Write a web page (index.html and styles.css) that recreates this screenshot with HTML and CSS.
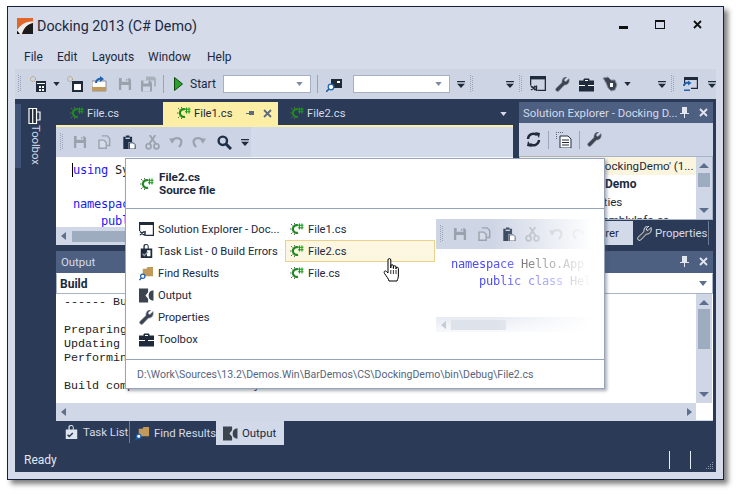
FILE: index.html
```html
<!DOCTYPE html>
<html lang="en">
<head>
<meta charset="utf-8">
<title>Docking 2013 (C# Demo)</title>
<link rel="stylesheet" href="styles.css">
</head>
<body>
<svg class="defs" width="0" height="0" aria-hidden="true">
  <defs>
    <symbol id="cs" viewBox="0 0 14 14">
      <path d="M8 3.300A3.900 3.900 0 1 0 8 10.700" fill="none" stroke="#1c8a1c" stroke-width="2.200"/>
      <path d="M1 2l1.500 1.500M1 12l1.500-1.500M0 7h1.500M4.500 1v1.500M4.500 11.500V13" stroke="#5c6b5c" stroke-width="1"/>
      <path d="M9.500 1.500v6M12 1.500v6M8 3.300h5.500M8 5.700h5.500" stroke="#1c9a1c" stroke-width="1.100"/>
    </symbol>
    <symbol id="save" viewBox="0 0 15 15">
      <path d="M1 1h11l2 2v11H1z" fill="#9aa3ad"/>
      <path d="M4 1h7v4H4zM3.500 8.500h8V14h-8z" fill="#cfd6e5"/>
      <path d="M8.500 2h1.500v2H8.500z" fill="#9aa3ad"/>
    </symbol>
    <symbol id="saveall" viewBox="0 0 16 15">
      <path d="M6 0h8l2 2v8h-2V4H6z" fill="#a9b1bb"/>
      <path d="M1 4h9l2 2v9H1z" fill="#9aa3ad"/>
      <path d="M3.500 4h5v3h-5zM3 10h7v5H3z" fill="#cfd6e5"/>
    </symbol>
    <symbol id="copy" viewBox="0 0 15 16">
      <path d="M5 1h6l3 3v8h-3" fill="none" stroke="#9aa3ad" stroke-width="1.600"/>
      <path d="M1.800 5.800h5.500l2.700 2.700v6.700H1.800z" fill="#d6dcea" stroke="#9aa3ad" stroke-width="1.600"/>
    </symbol>
    <symbol id="paste" viewBox="0 0 15 16">
      <path d="M1 2h3V.5h4V2h3v6H7v8H1z" fill="#1e3048"/>
      <path d="M3.500 3h5v1.500h-5z" fill="#cfd6e5"/>
      <path d="M8 9h4.500l2 2v5H8z" fill="#fff" stroke="#1e3048"/>
    </symbol>
    <symbol id="cut" viewBox="0 0 16 16">
      <circle cx="3.800" cy="12" r="2.700" fill="none" stroke="#9aa3ad" stroke-width="1.800"/>
      <circle cx="12.200" cy="12" r="2.700" fill="none" stroke="#9aa3ad" stroke-width="1.800"/>
      <path d="M4.500 9.500L11 0M11.500 9.500L5 0" stroke="#9aa3ad" stroke-width="2"/>
    </symbol>
    <symbol id="undo" viewBox="0 0 14 14">
      <path d="M3 7A5 4.500 0 0 1 12 5C13 7.500 12 10 10 12" fill="none" stroke="#9aa3ad" stroke-width="2.200"/>
      <path d="M0 3.500h6.500L3 8.500z" fill="#9aa3ad"/>
    </symbol>
    <symbol id="search" viewBox="0 0 15 15">
      <circle cx="5.800" cy="5.800" r="4.200" fill="none" stroke="#1e3048" stroke-width="2.400"/>
      <path d="M9 9l5 5" stroke="#1e3048" stroke-width="3"/>
    </symbol>
    <symbol id="sol" viewBox="0 0 15 15">
      <path d="M0 0h15v14H7v-1.200h6.800V3H1.200v6H0z" fill="#1f2a3a"/>
      <path d="M0 3h15v-3H0z" fill="#1f2a3a"/>
      <path d="M1 9.500l4 3.500M1 13l4-3.500M6 9v5" stroke="#1f2a3a" stroke-width="1.500"/>
    </symbol>
    <symbol id="task" viewBox="0 0 15 17">
      <path d="M1 5h3V2.500a3 2.500 0 0 1 6 0V5h4v11H1z" fill="#1f2a3a"/>
      <path d="M5.500 2.500a1.700 1.500 0 0 1 3.400 0V5H5.500zM8 7h4v7H8z" fill="#fff"/>
      <path d="M3 11l2 2 4-4" fill="none" stroke="#8f9aa8" stroke-width="1.600"/>
    </symbol>
    <symbol id="find" viewBox="0 0 16 16">
      <path d="M4 3h4l1-2h6v10H4z" fill="#c19a5b"/>
      <circle cx="4" cy="11" r="2.300" fill="#fff" stroke="#1e62b0" stroke-width="1.300"/>
      <path d="M2.500 12.700L.5 15" stroke="#1e62b0" stroke-width="1.500"/>
    </symbol>
    <symbol id="out" viewBox="0 0 14 13">
      <path d="M0 0h8.500v3.500L6 6.500l2.500 3V13H0z" fill="#3c4450"/>
      <path d="M13.500 1.500v10A5 5 0 0 1 9 6.500 5 5 0 0 1 13.500 1.500z" fill="#3c4450"/>
    </symbol>
    <symbol id="wrench" viewBox="0 0 15 15">
      <path d="M14 1.500L11 4.500 9.500 4 9.300 2.500 12 0C9 -.5 6.500 2 7 5.500L.8 11.500a2 2 0 0 0 2.700 2.700L9.500 8C13 8.500 15 5 14 1.500z" fill="#3c4450" stroke="#8f9aa8" stroke-width=".6"/>
    </symbol>
    <symbol id="case" viewBox="0 0 15 13">
      <path d="M5 3V1h5v2M0 3h15v10H0z" fill="#1f2a3a" stroke="#1f2a3a"/>
      <path d="M6 2h3v1H6zM0 7h6v1H0zM9 7h6v1H9z" fill="#fff"/>
    </symbol>
    <symbol id="tri" viewBox="0 0 8 5"><path d="M0 0h8L4 5z"/></symbol>
    <symbol id="dd" viewBox="0 0 9 8"><path d="M0 0h9v1.500H0zM0 3h9L4.500 8z"/></symbol>
    <symbol id="x" viewBox="0 0 9 9"><path d="M1 1l7 7M8 1L1 8" fill="none" stroke="currentColor" stroke-width="1.800"/></symbol>
    <symbol id="pin" viewBox="0 0 9 11"><path d="M2 0h5v6h2v1H5v4H4V7H0V6h2z" fill="currentColor"/></symbol>
    <symbol id="grip" viewBox="0 0 5 18"><path d="M0 0h1v1H0zM2 1h1v1H2zM0 2h1v1H0zM2 3h1v1H2zM0 4h1v1H0zM2 5h1v1H2zM0 6h1v1H0zM2 7h1v1H2zM0 8h1v1H0zM2 9h1v1H2zM0 10h1v1H0zM2 11h1v1H2zM0 12h1v1H0zM2 13h1v1H2zM0 14h1v1H0zM2 15h1v1H2zM0 16h1v1H0z" fill="#98a4b6"/></symbol>
  </defs>
</svg>

<div class="window">
  <header class="titlebar">
    <svg class="logo" viewBox="0 0 16 16" aria-hidden="true">
      <rect width="16" height="16" fill="#e2662a"/>
      <path d="M0 16V12C4 6 9 3.500 16 3.500V5C10 6.500 7 10 5 16z" fill="#eee"/>
      <path d="M5 16C7 10 10 6.500 16 5V16z" fill="#1c1c1c"/>
      <path d="M0 16V12.500L3 16z" fill="#111"/>
    </svg>
    <h1 class="title">Docking 2013 (C# Demo)</h1>
    <div class="winbtns">
      <span class="wb-min"></span>
      <span class="wb-max"></span>
      <svg class="wb-close" aria-hidden="true"><use href="#x"/></svg>
    </div>
  </header>

  <nav class="menu">
    <span>File</span><span>Edit</span><span>Layouts</span><span>Window</span><span>Help</span>
  </nav>

  <div class="toolbar">
    <svg class="grip" aria-hidden="true"><use href="#grip"/></svg>
    <svg class="i16 m7" viewBox="0 0 16 16" aria-hidden="true"><path d="M6 5h10v11H6z" fill="#1f2a3a"/><path d="M7 7h8v1H7zM9 10h2v2H9zM12 10h2v2h-2zM9 13h2v2H9zM12 13h2v2h-2z" fill="#fff"/><circle cx="3" cy="3" r="2.500" fill="none" stroke="#b98a45" stroke-dasharray="1 1"/></svg>
    <svg class="tri m7" aria-hidden="true"><use href="#tri"/></svg>
    <svg class="i16 m7" viewBox="0 0 16 16" aria-hidden="true"><path d="M5 5h11v11H5z" fill="#1f2a3a"/><path d="M7 8h7v6H7z" fill="#fff"/><circle cx="3" cy="3" r="2.500" fill="none" stroke="#b98a45" stroke-dasharray="1 1"/></svg>
    <svg class="i16 m9" viewBox="0 0 16 16" aria-hidden="true"><path d="M0 5h14v10H0z" fill="#fff" stroke="#8a8f96"/><path d="M0 11h14v4H0z" fill="#c19a5b"/><path d="M4 7a4 4 0 0 1 5-4" fill="none" stroke="#1e62b0" stroke-width="2"/><path d="M8 0l4 3-4 3z" fill="#1e62b0"/></svg>
    <svg class="i14 m10" aria-hidden="true"><use href="#save"/></svg>
    <svg class="i16 m8" aria-hidden="true"><use href="#saveall"/></svg>
    <span class="sep m7"></span>
    <svg class="play m10" viewBox="0 0 9 14" aria-hidden="true"><path d="M.5 .5L8.500 7 .5 13.500z" fill="#2ea02e" stroke="#0c4a0c"/></svg>
    <span class="start">Start</span>
    <span class="combo c1"><svg class="tri" aria-hidden="true"><use href="#tri"/></svg></span>
    <span class="sep m6"></span>
    <svg class="i16 m8" viewBox="0 0 16 16" aria-hidden="true"><path d="M5 3h11v9H5z" fill="#1f2a3a"/><path d="M11 5h3v2h-3z" fill="#fff"/><circle cx="5" cy="11" r="2.800" fill="#fff" stroke="#1e62b0" stroke-width="1.300"/><path d="M3 13l-3 3" stroke="#1e62b0" stroke-width="1.600"/></svg>
    <span class="combo c2"><svg class="tri" aria-hidden="true"><use href="#tri"/></svg></span>
    <svg class="dd m7" aria-hidden="true"><use href="#dd"/></svg>
    <svg class="grip m5" aria-hidden="true"><use href="#grip"/></svg>
    <svg class="dd m28" aria-hidden="true"><use href="#dd"/></svg>
    <svg class="grip m5" aria-hidden="true"><use href="#grip"/></svg>
    <svg class="i16 m6" aria-hidden="true"><use href="#sol"/></svg>
    <svg class="i15 m9" aria-hidden="true"><use href="#wrench"/></svg>
    <svg class="i15 m9" aria-hidden="true"><use href="#case"/></svg>
    <svg class="i16 m8" viewBox="0 0 16 16" aria-hidden="true"><path d="M1 2l5-1 3 3 4 0 2 5-2 5-4 1-3-3-2-5z" fill="#3c4450" stroke="#8f9aa8"/><path d="M8 7h3v4H8z" fill="#fff"/></svg>
    <svg class="tri m6" aria-hidden="true"><use href="#tri"/></svg>
    <svg class="dd m27" aria-hidden="true"><use href="#dd"/></svg>
    <svg class="grip m5" aria-hidden="true"><use href="#grip"/></svg>
    <svg class="i16 m7" viewBox="0 0 16 16" aria-hidden="true"><path d="M1 1h14v12H8v-1.200h5.800V4H2.200v5H1z" fill="#1f2a3a"/><path d="M1 10a3 3 0 0 1 4-3" fill="none" stroke="#1e62b0" stroke-width="2"/><path d="M5 4.500l3.500 2.500L5 9.500zM1 15h6v-1.500H1z" fill="#1e62b0"/></svg>
    <svg class="dd m9" aria-hidden="true"><use href="#dd"/></svg>
  </div>

  <div class="workspace">
    <div class="dockarea">
      <aside class="sidestrip">
        <span class="strip-tab"></span>
        <div class="toolbox-tab">
          <svg class="toolbox-ic" viewBox="0 0 13 16" aria-hidden="true"><path d="M1 .5h7.500v15H1z" fill="#222b3a"/><path d="M1 .5h7.500v15H1zM8.500 4h3.500v8H8.500zM4.700 .5v15" fill="none" stroke="#fff" stroke-width="1.200"/></svg>
          <span class="vtext">Toolbox</span>
        </div>
      </aside>
      <div class="docks">
        <div class="toprow">
          <section class="docpane">
            <div class="doctabs">
              <div class="doctab tab-a"><svg class="i14" aria-hidden="true"><use href="#cs"/></svg><span>File.cs</span></div>
              <div class="doctab tab-b active"><svg class="i14" aria-hidden="true"><use href="#cs"/></svg><span>File1.cs</span>
                <svg class="tabpin" viewBox="0 0 9 7" aria-hidden="true"><path d="M0 3h3V1h5v4H3V4H0z" fill="#5d6b80"/></svg>
                <svg class="tabx" aria-hidden="true"><use href="#x"/></svg></div>
              <div class="doctab tab-c"><svg class="i14" aria-hidden="true"><use href="#cs"/></svg><span>File2.cs</span></div>
              <svg class="tabmenu" aria-hidden="true"><use href="#tri"/></svg>
            </div>
            <div class="docbody">
              <div class="doctools">
                <div class="doctools-in">
                  <svg class="grip" aria-hidden="true"><use href="#grip"/></svg>
                  <svg class="i14 g8" aria-hidden="true"><use href="#save"/></svg>
                  <svg class="i14 g10" aria-hidden="true"><use href="#copy"/></svg>
                  <svg class="i14 g11" aria-hidden="true"><use href="#paste"/></svg>
                  <svg class="i15 g9" aria-hidden="true"><use href="#cut"/></svg>
                  <svg class="i14 g9" aria-hidden="true"><use href="#undo"/></svg>
                  <svg class="i14 g9 flip" aria-hidden="true"><use href="#undo"/></svg>
                  <svg class="i15 g11" aria-hidden="true"><use href="#search"/></svg>
                  <svg class="dd g9" aria-hidden="true"><use href="#dd"/></svg>
                </div>
              </div>
              <pre class="code"><span class="kw caret">using</span> System;

<span class="kw">namespace</span> Hello.App {
    <span class="kw">public class</span> HelloWorld {</pre>
              <div class="hscroll hs-doc"><span class="arr-l"></span><span class="thumb"></span></div>
            </div>
          </section>
          <section class="rightpane">
            <div class="ptitle">
              <span class="ptitle-text">Solution Explorer - Docking D...</span>
              <svg class="ppin" aria-hidden="true"><use href="#pin"/></svg>
              <svg class="px" aria-hidden="true"><use href="#x"/></svg>
            </div>
            <div class="rtools">
              <svg class="i15" viewBox="0 0 15 15" aria-hidden="true"><path d="M2 7a5.500 5.500 0 0 1 9-4M13 8a5.500 5.500 0 0 1-9 4" fill="none" stroke="#1f2a3a" stroke-width="2.400"/><path d="M9 0l5 1-1 5zM6 15l-5-1 1-5z" fill="#1f2a3a"/></svg>
              <span class="sep2"></span>
              <svg class="i16" viewBox="0 0 16 16" aria-hidden="true"><path d="M4 4h8l3 3v9H4z" fill="#fff" stroke="#1f2a3a"/><path d="M6 8h7M6 10.500h7M6 13h7" stroke="#1f2a3a"/><path d="M0 0h1v1H0zM2 0h1v1H2zM4 0h1v1H4zM6 0h1v1H6zM0 2h1v1H0zM0 4h1v1H0zM0 6h1v1H0z" fill="#667"/></svg>
              <span class="sep2"></span>
              <svg class="i15" aria-hidden="true"><use href="#wrench"/></svg>
            </div>
            <div class="tree">
              <div class="tree-rows">
                <div class="row sel">Solution 'DockingDemo' (1...</div>
                <div class="row bold">DockingDemo</div>
                <div class="row">Properties</div>
                <div class="row r4">AssemblyInfo.cs</div>
              </div>
              <div class="vscroll vs-tree"><span class="up"></span><span class="vthumb t-tree"></span><span class="dn"></span></div>
            </div>
            <div class="rtabs">
              <div class="rtab on">Solution Explorer</div>
              <div class="rtab off"><svg class="i15 lite" viewBox="0 0 15 15" aria-hidden="true"><path d="M14 1.500L11 4.500 9.500 4 9.300 2.500 12 0C9 -.5 6.500 2 7 5.500L.8 11.500a2 2 0 0 0 2.700 2.700L9.500 8C13 8.500 15 5 14 1.500z" fill="#3c4450" stroke="#dfe4ee"/></svg>Properties</div>
            </div>
          </section>
        </div>

        <section class="outpane">
          <div class="ptitle">
            <span class="ptitle-text">Output</span>
            <svg class="ppin" aria-hidden="true"><use href="#pin"/></svg>
            <svg class="px" aria-hidden="true"><use href="#x"/></svg>
          </div>
          <div class="outcombo"><b>Build</b><svg class="tri" aria-hidden="true"><use href="#tri"/></svg></div>
          <div class="outmain">
            <pre class="log">------ Build started ------

Preparing resources
Updating references
Performing main compilation

Build completed successfully.</pre>
            <div class="vscroll vs-out"><span class="up"></span><span class="vthumb t-out"></span><span class="dn"></span></div>
          </div>
          <div class="outfoot">
            <div class="hscroll hs-out"><span class="arr-l"></span><span class="arr-r"></span></div>
            <span class="corner"></span>
          </div>
        </section>

        <div class="bottabs">
          <div class="btab b-task"><svg class="i15 lite2" viewBox="0 0 15 17" aria-hidden="true"><path d="M1 5h3V2.500a3 2.500 0 0 1 6 0V5h4v11H1z" fill="#dfe4ee"/><path d="M5.500 2.500a1.700 1.500 0 0 1 3.400 0V5H5.500z" fill="#2a3a57"/><path d="M3 11l2 2 4-4" fill="none" stroke="#2a3a57" stroke-width="1.600"/></svg>Task List</div>
          <div class="btab b-find"><svg class="i15" aria-hidden="true"><use href="#find"/></svg>Find Results</div>
          <div class="btab b-out on"><svg class="i15" aria-hidden="true"><use href="#out"/></svg>Output</div>
        </div>
      </div>
    </div>
    <footer class="status">
      <span class="ready">Ready</span>
      <span class="st-sep"></span>
      <span class="st-sep st-sep2"></span>
      <svg class="sizegrip" viewBox="0 0 8 8" aria-hidden="true"><path d="M6 0h1v1H6zM6 2h1v1H6zM4 2h1v1H4zM6 4h1v1H6zM4 4h1v1H4zM2 4h1v1H2zM6 6h1v1H6zM4 6h1v1H4zM2 6h1v1H2zM0 6h1v1H0z" fill="#8794aa"/></svg>
    </footer>
  </div>
</div>

<div class="popup">
  <div class="pop-head">
    <svg class="i14" aria-hidden="true"><use href="#cs"/></svg>
    <div class="pop-name"><b>File2.cs</b><b>Source file</b></div>
  </div>
  <div class="pop-body">
    <ul class="pop-col col-a">
      <li><svg class="i15" aria-hidden="true"><use href="#sol"/></svg>Solution Explorer - Doc...</li>
      <li><svg class="i15" aria-hidden="true"><use href="#task"/></svg>Task List - 0 Build Errors</li>
      <li><svg class="i15" aria-hidden="true"><use href="#find"/></svg>Find Results</li>
      <li><svg class="i15" aria-hidden="true"><use href="#out"/></svg>Output</li>
      <li><svg class="i15" aria-hidden="true"><use href="#wrench"/></svg>Properties</li>
      <li><svg class="i15" aria-hidden="true"><use href="#case"/></svg>Toolbox</li>
    </ul>
    <ul class="pop-col col-b">
      <li><svg class="i14" aria-hidden="true"><use href="#cs"/></svg>File1.cs</li>
      <li class="hot"><svg class="i14" aria-hidden="true"><use href="#cs"/></svg>File2.cs</li>
      <li><svg class="i14" aria-hidden="true"><use href="#cs"/></svg>File.cs</li>
    </ul>
    <div class="preview">
      <div class="pv-tools">
        <svg class="grip" aria-hidden="true"><use href="#grip"/></svg>
        <svg class="i14 g8" aria-hidden="true"><use href="#save"/></svg>
        <svg class="i14 g10" aria-hidden="true"><use href="#copy"/></svg>
        <svg class="i14 g11" aria-hidden="true"><use href="#paste"/></svg>
        <svg class="i15 g9" aria-hidden="true"><use href="#cut"/></svg>
        <svg class="i14 g9" aria-hidden="true"><use href="#undo"/></svg>
        <svg class="i14 g9 flip" aria-hidden="true"><use href="#undo"/></svg>
      </div>
      <pre class="pv-code"><span class="kw">namespace</span> Hello.App {
    <span class="kw">public class</span> HelloWorld</pre>
      <div class="pv-scroll"><span class="arr-l"></span><span class="pv-thumb"></span></div>
    </div>
  </div>
  <div class="pop-foot">D:\Work\Sources\13.2\Demos.Win\BarDemos\CS\DockingDemo\bin\Debug\File2.cs</div>
  <svg class="hand" viewBox="0 0 17 24" aria-hidden="true"><path d="M5 2a1.400 1.400 0 0 1 2.800 0V10V8a1.300 1.300 0 0 1 2.600 0V10.500V9a1.300 1.300 0 0 1 2.600 0V11V10.500a1.200 1.200 0 0 1 2.400 0V17C15.500 20 14.500 21 14 23H6C5.500 20.500 3.500 18.500 1.500 15.500C.5 13.500 2 12 3.500 13.500L5 15z" fill="#fff" stroke="#000"/><path d="M7.800 12v4M10.400 12v4M13 12v4" stroke="#000" stroke-width=".8"/></svg>
</div>
</body>
</html>
```

FILE: styles.css
```css
* { box-sizing: border-box; }
html, body { margin: 0; padding: 0; }
body {
  width: 737px;
  height: 494px;
  overflow: hidden;
  background: #fff;
  font-family: Roboto, "Noto Sans", sans-serif;
  font-size: 11.2px;
  color: #1b2940;
  position: relative;
}
.defs { position: absolute; }
svg { display: block; flex: none; }
ul { list-style: none; margin: 0; padding: 0; }
pre { margin: 0; }

.window {
  margin: 6px 0 0 7px;
  width: 717px;
  height: 474px;
  padding-bottom: 7px;
  border: 1px solid #16233a;
  background: #d5dbe9;
  box-shadow: 4px 4px 5px rgba(40, 40, 40, .6);
  display: flex;
  flex-direction: column;
}

/* Title */
.titlebar { height: 36px; display: flex; align-items: center; padding: 2px 0 0 9px; flex: none; }
.logo { width: 16px; height: 16px; }
.title { margin: 0 0 0 4px; font-size: 14.300px; font-weight: 400; color: #1b2940; }
.winbtns { margin-left: auto; display: flex; align-items: center; padding: 0 21px 3px 0; }
.wb-min { width: 9px; height: 3px; background: #111; margin-top: 5px; }
.wb-max { width: 10px; height: 9px; border: 1px solid #111; border-top-width: 2px; margin-left: 27px; }
.wb-close { width: 9px; height: 9px; margin-left: 28px; color: #111; }

/* Menu */
.menu { height: 26px; display: flex; align-items: center; padding: 1px 0 0 16px; font-size: 12px; flex: none; }
.menu span:nth-child(1) { width: 33px; }
.menu span:nth-child(2) { width: 35px; }
.menu span:nth-child(3) { width: 56px; }
.menu span:nth-child(4) { width: 59px; }

/* Toolbar */
.toolbar { height: 30px; margin-left: 7px; width: 701px; background: #cdd4e4; display: flex; align-items: center; padding-left: 3px; flex: none; }
.grip { width: 5px; height: 18px; }
.i14 { width: 14px; height: 14px; }
.i15 { width: 15px; height: 15px; }
.i16 { width: 16px; height: 16px; }
.tri { width: 7px; height: 4px; fill: #1f2a3a; }
.dd { width: 8px; height: 7px; fill: #1f2a3a; }
.m5 { margin-left: 5px; }
.m6 { margin-left: 6px; }
.m7 { margin-left: 7px; }
.m8 { margin-left: 8px; }
.m9 { margin-left: 9px; }
.m10 { margin-left: 10px; }
.m27 { margin-left: 27px; }
.m28 { margin-left: 31px; }
.g8 { margin-left: 8px; }
.g9 { margin-left: 9px; }
.g10 { margin-left: 10px; }
.g11 { margin-left: 11px; }
.sep { width: 1px; height: 18px; background: #98a4b6; }
.play { width: 9px; height: 14px; }
.start { width: 33px; margin-left: 7px; font-size: 12px; }
.combo { height: 18px; background: #fff; border: 1px solid #a5b0c3; display: flex; align-items: center; justify-content: flex-end; padding-right: 7px; }
.combo .tri { fill: #7c8ba4; }
.c1 { width: 88px; }
.c2 { width: 97px; margin-left: 11px; }
.flip { transform: scaleX(-1); }

/* Workspace */
.workspace { flex: 1; margin-left: 7px; width: 701px; background: #2a3a57; display: flex; flex-direction: column; min-height: 0; }
.dockarea { flex: 1; display: flex; min-height: 0; }
.sidestrip { width: 41px; display: flex; color: #d5dbe9; flex: none; }
.strip-tab { width: 6px; height: 64px; margin-top: 5px; background: #3e5376; flex: none; }
.toolbox-tab { padding: 9px 0 0 7px; }
.toolbox-ic { width: 13px; height: 16px; }
.vtext { display: block; writing-mode: vertical-rl; margin: 1px 0 0 1px; line-height: 13px; }
.docks { flex: 1; display: flex; flex-direction: column; min-width: 0; padding-top: 3px; }
.toprow { display: flex; height: 143px; flex: none; }

/* Doc pane */
.docpane { width: 457px; display: flex; flex-direction: column; }
.doctabs { height: 23px; display: flex; position: relative; flex: none; color: #d5dbe9; }
.doctab { display: flex; align-items: center; height: 23px; padding-bottom: 1px; }
.doctab span { margin-left: 3px; }
.tab-a { width: 107px; padding-left: 14px; }
.tab-b { width: 115px; padding-left: 14px; background: #fdeea5; color: #1b2940; }
.tab-c { padding-left: 12px; }
.tabpin { width: 9px; height: 7px; margin-left: 14px; }
.tabx { width: 9px; height: 9px; margin-left: 8px; color: #5d6b80; }
.tabmenu { width: 7px; height: 4px; fill: #d5dbe9; margin: 10px 6px 0 auto; }
.docbody { flex: 1; border-top: 2px solid #fdeea5; background: #fff; display: flex; flex-direction: column; min-height: 0; }
.doctools { height: 30px; background: #d3dae9; flex: none; }
.doctools-in { width: 195px; height: 30px; background: #ccd3e4; display: flex; align-items: center; padding-left: 4px; }
.code { flex: 1; font: 12px/17px "DejaVu Sans Mono", "Liberation Mono", monospace; letter-spacing: -.22px; padding: 5px 0 0 17px; color: #222; overflow: hidden; }
.kw { color: #1a1af5; }
.caret { border-left: 1px solid #000; margin-left: -1px; }
.hscroll { background: #d0d7e7; display: flex; align-items: center; }
.hs-doc { height: 18px; flex: none; padding-left: 5px; }
.arr-l { width: 0; height: 0; border: 4px solid transparent; border-left-width: 0; border-right: 5px solid #5d6f8c; }
.arr-r { width: 0; height: 0; border: 4px solid transparent; border-right-width: 0; border-left: 5px solid #5d6f8c; margin-left: auto; margin-right: 4px; }
.thumb { width: 60px; height: 11px; background: #9eacbf; margin-left: 6px; }

/* Right pane */
.rightpane { width: 194px; margin-left: 6px; display: flex; flex-direction: column; }
.ptitle { height: 21px; background: #4d6082; color: #d5dbe9; display: flex; align-items: center; padding: 0 5px 0 4px; flex: none; font-size: 11.400px; }
.ptitle-text { flex: 1; overflow: hidden; white-space: nowrap; }
.ppin { width: 9px; height: 11px; color: #e2e6ef; margin-right: 10px; }
.px { width: 9px; height: 9px; color: #e2e6ef; }
.rtools { height: 33px; background: #ced5e6; display: flex; align-items: center; padding-left: 7px; flex: none; }
.sep2 { width: 1px; height: 18px; background: #9aa7bb; margin: 0 7px; }
.tree { height: 64px; display: flex; background: #fff; border: 1px solid #a7b3c6; flex: none; }
.tree-rows { flex: 1; overflow: hidden; font-size: 11.600px; white-space: nowrap; min-width: 0; }
.row { height: 18px; line-height: 18px; padding-left: 49px; }
.row.sel { background: #fbf5dd; padding-left: 30px; }
.row.bold { font-weight: 700; padding-left: 41px; font-size: 12px; }
.row.r4 { padding-left: 63px; }
.vscroll { width: 16px; background: #cfd6e6; display: flex; flex-direction: column; align-items: center; flex: none; }
.up, .dn { width: 0; height: 0; border: 5px solid transparent; }
.up { border-top-width: 0; border-bottom: 5px solid #5d6f8c; margin-top: 6px; }
.dn { border-bottom-width: 0; border-top: 5px solid #5d6f8c; margin-top: auto; margin-bottom: 6px; }
.vthumb { width: 12px; background: #9eacbf; }
.t-tree { height: 14px; margin-top: 5px; }
.t-out { height: 40px; margin-top: 4px; }
.rtabs { display: flex; height: 24px; margin-top: 1px; flex: none; }
.rtab { display: flex; align-items: center; height: 24px; white-space: nowrap; font-size: 11.400px; }
.rtab.on { width: 114px; background: #d2d9e8; padding-left: 14px; }
.rtab.off { color: #d5dbe9; padding-left: 4px; width: 76px; border-right: 1px solid #6b7c98; }
.lite { margin-right: 3px; }

/* Output */
.outpane { margin-top: 6px; height: 170px; width: 657px; background: #fff; display: flex; flex-direction: column; flex: none; }
.outpane .ptitle { height: 22px; padding-left: 5px; padding-bottom: 1px; }
.outcombo { height: 21px; display: flex; align-items: center; justify-content: space-between; padding: 0 5px 0 3px; border: 1px solid #a7b3c6; border-top: 1px solid #fff; font-size: 12px; flex: none; }
.outcombo .tri { fill: #5d6f8c; width: 8px; height: 5px; }
.outmain { flex: 1; display: flex; min-height: 0; }
.log { flex: 1; font: 11.700px/14px "Liberation Mono", monospace; padding: 1px 0 0 8px; color: #222; overflow: hidden; }
.vs-out { margin-right: 1px; }
.outfoot { height: 18px; display: flex; flex: none; }
.hs-out { flex: 1; padding-left: 5px; }
.corner { width: 17px; background: #fff; border-bottom: 1px solid #cfd6e6; }

/* Bottom tabs */
.bottabs { height: 24px; display: flex; padding-left: 8px; flex: none; color: #d5dbe9; font-size: 11.400px; }
.btab { display: flex; align-items: center; height: 24px; gap: 4px; white-space: nowrap; }
.b-task { width: 66px; border-right: 1px solid #6b7c98; height: 22px; }
.b-find { width: 86px; padding-left: 5px; }
.b-out { width: 68px; padding-left: 7px; }
.btab.on { background: #d2d9e8; color: #1b2940; }

/* Status */
.status { height: 27px; display: flex; align-items: center; padding: 2px 2px 0 9px; color: #e4e8f0; font-size: 12px; flex: none; }
.ready { margin-right: auto; }
.st-sep { width: 1px; height: 18px; background: #e8ecf3; margin-right: 20px; }
.st-sep2 { margin-right: 15px; }
.sizegrip { width: 8px; height: 8px; align-self: flex-end; margin-bottom: 2px; }

/* Popup */
.popup {
  position: absolute;
  left: 125px;
  top: 158px;
  width: 480px;
  height: 231px;
  background: #fff;
  border: 1px solid #97a5ba;
  box-shadow: 2px 2px 3px rgba(70, 80, 100, .45);
  display: flex;
  flex-direction: column;
}
.pop-head { height: 50px; border-bottom: 1px solid #97a5ba; display: flex; align-items: center; padding-left: 14px; flex: none; }
.pop-name { margin-left: 5px; display: flex; flex-direction: column; line-height: 13px; font-size: 11.700px; }
.pop-body { flex: 1; display: flex; min-height: 0; padding-top: 9px; }
.pop-col li { height: 22px; display: flex; align-items: center; white-space: nowrap; gap: 4px; }
.col-a { width: 159px; padding-left: 13px; }
.col-b { width: 150px; }
.col-b li { padding-left: 4px; border: 1px solid transparent; }
.col-b li.hot { background: #fdf6e0; border-color: #ebd28c; }
.preview {
  width: 160px;
  height: 115px;
  margin: 1px 0 0 1px;
  overflow: hidden;
  -webkit-mask-image: linear-gradient(to right, #000 35%, transparent 98%);
  mask-image: linear-gradient(to right, #000 35%, transparent 98%);
}
.pv-tools { height: 30px; background: #ced5e5; display: flex; align-items: center; padding-left: 4px; }
.pv-code { height: 68px; padding: 7px 0 0 15px; font: 12px/17px "DejaVu Sans Mono", "Liberation Mono", monospace; letter-spacing: -.22px; color: #444; }
.pv-code .kw { color: #4a4af8; }
.pv-scroll { height: 15px; background: linear-gradient(#e6eaf2, #f8f9fb); display: flex; align-items: center; padding-left: 5px; }
.pv-scroll .arr-l { border-right-color: #c3cbd8; }
.pv-thumb { width: 55px; height: 10px; margin-left: 5px; background: #dde2eb; }
.pop-foot { height: 29px; border-top: 1px solid #97a5ba; display: flex; align-items: center; padding-left: 11px; font-size: 10.500px; color: #56657c; flex: none; white-space: nowrap; }
.hand { position: absolute; left: 257px; top: 99px; width: 17px; height: 24px; }
```
